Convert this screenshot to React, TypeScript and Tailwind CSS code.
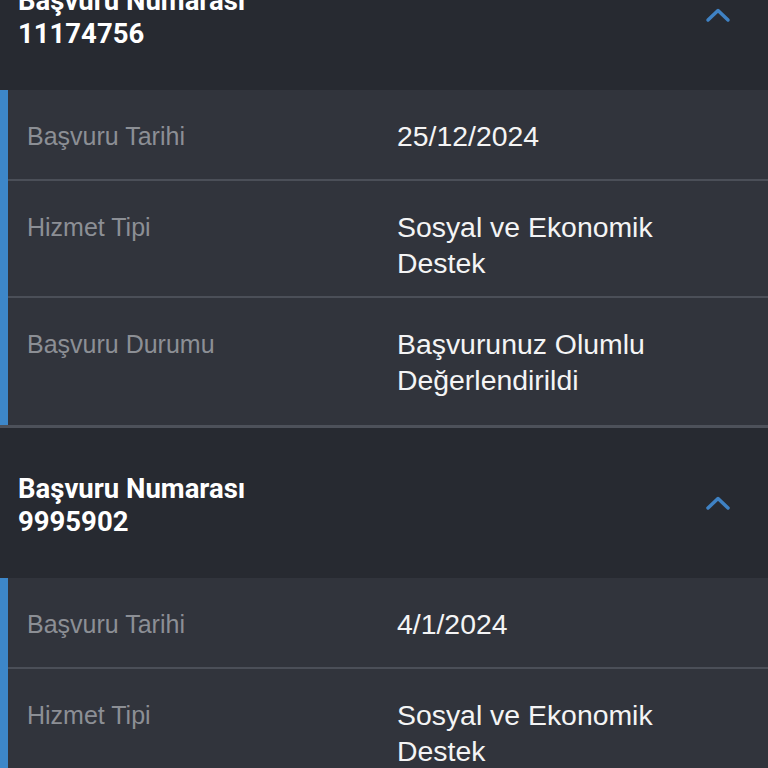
type Row = { label: string; value: string };
type Application = { no: string; rows: Row[] };

const apps: Application[] = [
  {
    no: "11174756",
    rows: [
      { label: "Başvuru Tarihi", value: "25/12/2024" },
      { label: "Hizmet Tipi", value: "Sosyal ve Ekonomik Destek" },
      { label: "Başvuru Durumu", value: "Başvurunuz Olumlu Değerlendirildi" },
    ],
  },
  {
    no: "9995902",
    rows: [
      { label: "Başvuru Tarihi", value: "4/1/2024" },
      { label: "Hizmet Tipi", value: "Sosyal ve Ekonomik Destek" },
      { label: "Başvuru Durumu", value: "Başvurunuz Olumlu Değerlendirildi" },
    ],
  },
];

function Chevron() {
  return (
    <svg width="26" height="16" viewBox="0 0 26 16" fill="none" className="text-[#3f82c4]">
      <polyline
        points="3,13 13,3.5 23,13"
        stroke="currentColor"
        strokeWidth="3.5"
        strokeLinecap="round"
        strokeLinejoin="round"
      />
    </svg>
  );
}

export default function App() {
  return (
    <div className="h-[768px] w-[768px] overflow-hidden bg-[#272a31]">
      {/* list is scrolled a bit, first header is cut off at the top */}
      <div className="-mt-[60px]">
        {apps.map((a, i) => (
          <section key={a.no} className={i > 0 ? "border-t-[3px] border-[#4d515a]" : ""}>
            <div className="flex h-[150px] items-center justify-between pl-[18px] pr-[37px] bg-[#272a31]">
              <div className="pt-[3px] font-['Roboto',sans-serif] text-[27.5px] font-bold leading-[33px] text-white">
                <div>Başvuru Numarası</div>
                <div>{a.no}</div>
              </div>
              <Chevron />
            </div>

            <div className="border-l-[8px] border-[#3d87c9] bg-[#31343c] pb-[12px] font-['Liberation_Sans',Arial,sans-serif]">
              {a.rows.map((r, j) => (
                <div
                  key={r.label}
                  className={
                    "flex pt-[28px] pb-[15px] leading-[36px] " +
                    (j < a.rows.length - 1 ? "border-b-2 border-[#4b4f58]" : "")
                  }
                >
                  <div className="min-h-[46px] w-[389px] shrink-0 pl-[19px] text-[25px] text-[#8c8f95]">{r.label}</div>
                  <div className="flex-1 pr-[28px] text-[28.4px] text-[#f4f4f5]">{r.value}</div>
                </div>
              ))}
            </div>
          </section>
        ))}
      </div>
    </div>
  );
}
